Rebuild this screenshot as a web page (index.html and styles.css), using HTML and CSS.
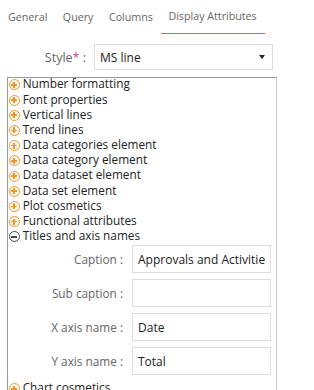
FILE: index.html
```html
<!DOCTYPE html>
<html lang="en">
  <head>
    <meta charset="UTF-8" />
    <title>Display Attributes</title>
    <link rel="stylesheet" href="styles.css">
  </head>
  <body>
    <div class="tabs">
      <div class="tab">General</div>
      <div class="tab">Query</div>
      <div class="tab">Columns</div>
      <div class="tab on">Display Attributes</div>
    </div>

    <div class="style_row">
      <label class="style_label">Style<span class="req">*</span> :</label>
      <div class="select">
        <span>MS line</span>
        <span class="caret"></span>
      </div>
    </div>

    <div class="tree">
      <div class="node"><span class="ico plus"></span>Number formatting</div>
      <div class="node"><span class="ico plus"></span>Font properties</div>
      <div class="node"><span class="ico plus"></span>Vertical lines</div>
      <div class="node"><span class="ico plus"></span>Trend lines</div>
      <div class="node"><span class="ico plus"></span>Data categories element</div>
      <div class="node"><span class="ico plus"></span>Data category element</div>
      <div class="node"><span class="ico plus"></span>Data dataset element</div>
      <div class="node"><span class="ico plus"></span>Data set element</div>
      <div class="node"><span class="ico plus"></span>Plot cosmetics</div>
      <div class="node"><span class="ico plus"></span>Functional attributes</div>
      <div class="node"><span class="ico minus"></span>Titles and axis names</div>
      <div class="fields">
        <div class="field">
          <label>Caption :</label>
          <input type="text" value="Approvals and Activities">
        </div>
        <div class="field">
          <label>Sub caption :</label>
          <input type="text" value="">
        </div>
        <div class="field">
          <label>X axis name :</label>
          <input type="text" value="Date">
        </div>
        <div class="field">
          <label>Y axis name :</label>
          <input type="text" value="Total">
        </div>
      </div>
      <div class="node"><span class="ico plus"></span>Chart cosmetics</div>
    </div>
  </body>
</html>
```

FILE: styles.css
```css
body {
  margin: 0;
  font-family: "Open Sans", "Liberation Sans", sans-serif;
  color: #333;
  background: #fff;
  overflow: hidden;
}

.tabs {
  display: flex;
  padding-left: 8px;
  height: 34px;
}

.tab {
  font-size: 10.7px;
  color: #666;
  padding: 10px 8px 0 0;
  margin-right: 7.5px;
}

.tab.on {
  padding: 9px 8px 0 7px;
  margin-left: -7px;
  border-bottom: 1.5px solid #29a3d6;
  box-sizing: border-box;
}

.style_row {
  display: flex;
  align-items: center;
  margin-top: 10px;
}

.style_label {
  width: 86px;
  text-align: right;
  font-size: 12.5px;
  color: #666;
  padding-right: 8px;
}

.req {
  color: #e0457b;
}

.select {
  width: 179px;
  height: 26px;
  border: 1px solid #ddd;
  display: flex;
  align-items: center;
  justify-content: space-between;
  padding: 0 7px 0 5px;
  box-sizing: border-box;
  font-size: 12px;
  color: #222;
}

.caret {
  border-left: 3.5px solid transparent;
  border-right: 3.5px solid transparent;
  border-top: 4px solid #222;
}

.tree {
  margin: 7px 0 0 7px;
  width: 268px;
  border: 1px solid #ccc;
  border-top-color: #999;
  border-left-color: #999;
}

.node {
  display: flex;
  align-items: center;
  height: 15.2px;
  line-height: 15.2px;
  font-size: 11.8px;
  color: #222;
}

.node:first-child {
  margin-top: -1.7px;
}

.ico {
  width: 9px;
  height: 9px;
  border: 1.7px solid #f7931e;
  border-radius: 50%;
  margin: 2px 3.2px 0 0.5px;
  position: relative;
  flex: none;
}

.ico::before,
.plus::after {
  content: "";
  position: absolute;
  background: #f7931e;
}

.ico::before {
  left: 1.5px;
  right: 1.5px;
  top: 3.7px;
  height: 1.6px;
}

.plus::after {
  top: 1.5px;
  bottom: 1.5px;
  left: 3.7px;
  width: 1.6px;
}

.minus {
  border-color: #4a4a4a;
  border-width: 1.4px;
}

.minus::before {
  background: #4a4a4a;
}

.fields {
  padding: 2px 0 0 0;
}

.field {
  display: flex;
  align-items: center;
  margin-bottom: 6px;
}

.field:last-child {
  margin-bottom: 5px;
}

.field label {
  width: 115px;
  text-align: right;
  font-size: 11.8px;
  color: #666;
  padding-right: 9px;
}

.field input {
  width: 139px;
  height: 28px;
  box-sizing: border-box;
  border: 1px solid #ddd;
  padding: 0 5px;
  font-family: inherit;
  font-size: 12px;
  color: #222;
  outline: none;
}
```
